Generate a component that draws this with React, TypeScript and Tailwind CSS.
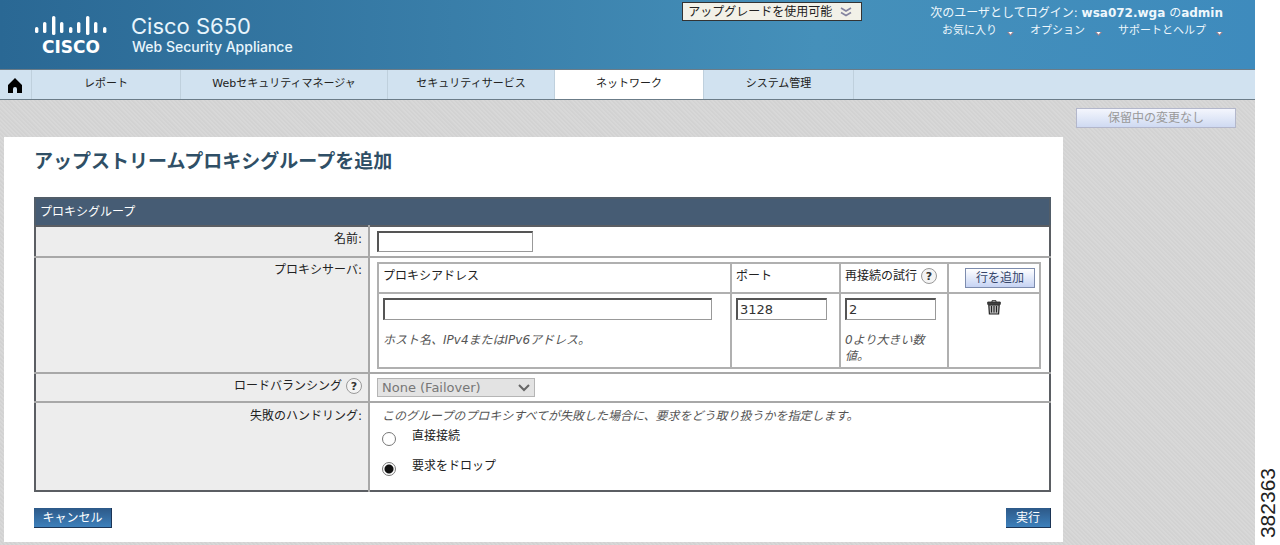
import { useState, type ReactNode } from "react";

const bars = [
  [0, 11, 6], [8, 6, 11], [17, 0, 19], [25, 6, 11], [34, 11, 6],
  [42, 6, 11], [51, 0, 19], [59, 6, 11], [68, 11, 6],
];

const tabs = [
  { label: "レポート", width: "w-[149px]" },
  { label: "Webセキュリティマネージャ", width: "w-[207px]" },
  { label: "セキュリティサービス", width: "w-[167px]" },
  { label: "ネットワーク", width: "w-[149px]", active: true },
  { label: "システム管理", width: "w-[150px]" },
];

const inset = "border-t-2 border-l-2 border-r border-b border-t-[#555] border-l-[#555] border-r-[#999] border-b-[#999] bg-white text-[#333] outline-none";
const hint = "text-xs leading-4 italic text-[#555]";
const action = "h-5 border-r border-b border-r-[#1c3556] border-b-[#1c3556] bg-gradient-to-b from-[#2d5988] to-[#3d80bb] text-xs leading-4 text-white";

function Logo() {
  return (
    <div className="flex w-[72px] flex-col items-center gap-1 text-white">
      <svg width="72" height="19" viewBox="0 0 72 19" fill="currentColor" aria-hidden="true">
        {bars.map(([x, y, h]) => <rect key={x} x={x} y={y} width="3.4" height={h} rx="1.6" />)}
      </svg>
      <span className="text-[17px] leading-4 font-bold">CISCO</span>
    </div>
  );
}

function Help() {
  return (
    <button type="button" aria-label="ヘルプ" className="ml-1 inline-flex size-4 shrink-0 items-center justify-center rounded-full border border-[#999] bg-[#f4f4f4] text-[11px] leading-none font-bold text-[#333]">
      ?
    </button>
  );
}

function MenuLink({ children }: { children: ReactNode }) {
  return (
    <a href="#" className="flex items-center gap-[10px]">
      {children}
      <svg className="mt-1" width="7" height="5" viewBox="0 0 7 5" aria-hidden="true">
        <path d="M0 1h7L3.5 5z" fill="#9c7f8c" />
        <path d="M1.5 1h4L3.5 3.4z" fill="#fff" />
      </svg>
    </a>
  );
}

function Trash() {
  return (
    <svg width="14" height="15" viewBox="0 0 14 15" aria-hidden="true">
      <path d="M5 0.7h4v1.6M5 0.7v1.6" fill="none" stroke="#333" />
      <path d="M0.7 2h12.6v2.4H0.7z" fill="#444" stroke="#222" strokeWidth="0.8" />
      <path d="M1.8 5h10.4l-0.6 9H2.4z" fill="#bbb" stroke="#222" strokeWidth="1.2" />
      <path d="M4.5 6v6.5M7 6v6.5M9.5 6v6.5" stroke="#222" strokeWidth="1.1" />
    </svg>
  );
}

export default function App() {
  const [failure, setFailure] = useState("drop");
  const label = "border-r-2 border-[#a8a8a8] bg-[#ededed] pr-[6px] text-right align-top font-normal";
  const cell = "border-2 border-[#b0b0b0] px-1 text-left align-top font-normal";
  return (
    <div className="flex bg-white font-['DejaVu_Sans','Noto_Sans_CJK_JP',sans-serif] text-xs leading-4 text-[#222]">
      <div className="min-w-0 flex-1 bg-[#d5d5d5] bg-[repeating-linear-gradient(45deg,#d2d2d2_0px,#d2d2d2_1px,#d8d8d8_2px,#d8d8d8_3px)]">
        <header className="flex h-[69px] bg-gradient-to-r from-[#2a6894] via-[#4590ba] via-65% to-[#3e8bbd]">
          <div className="flex flex-1 gap-6 pt-4 pl-[35px]">
            <Logo />
            <div className="font-['Inter',sans-serif] text-[#e8f5fc]">
              <div className="text-[22px] leading-5">Cisco S650</div>
              <div className="pt-[3px] pl-px text-sm leading-4 font-medium">Web Security Appliance</div>
            </div>
          </div>
          <div className="flex items-start gap-[68px] pr-8">
            <button type="button" className="mt-[2px] flex h-[19px] w-[180px] items-center justify-between border border-[#333] bg-[#f2f1e8] px-[5px] text-[#222]">
              アップグレードを使用可能
              <svg className="mr-1" width="12" height="10" viewBox="0 0 12 10" fill="none" stroke="#8484a0" strokeWidth="1.6" aria-hidden="true">
                <path d="M1 1l5 3 5-3M1 5.5l5 3 5-3" />
              </svg>
            </button>
            <div className="flex flex-col items-end pt-1 text-[#eef7fc]">
              <div className="leading-[18px]">次のユーザとしてログイン: <b>wsa072.wga</b> の<b>admin</b></div>
              <div className="flex gap-4 text-[11px] leading-[18px]">
                <MenuLink>お気に入り</MenuLink>
                <MenuLink>オプション</MenuLink>
                <MenuLink>サポートとヘルプ</MenuLink>
              </div>
            </div>
          </div>
        </header>
        <nav className="flex h-[31px] border-y border-[#6b7c88] bg-[#d1e2f0] text-[11px]">
          <a href="#" aria-label="ホーム" className="flex w-8 items-center border-r border-[#bfd0dd] pt-[2px] pl-2">
            <svg width="14" height="15" viewBox="0 0 14 15" aria-hidden="true">
              <path d="M7 0L14 7v8H9v-4a2 2 0 0 0-4 0v4H0V7z" fill="#000" />
            </svg>
          </a>
          {tabs.map((t) => (
            <a key={t.label} href="#" className={`${t.width} ${t.active ? "bg-white" : ""} border-r border-[#bfd0dd] pt-[6px] text-center`}>{t.label}</a>
          ))}
        </nav>
        <div className="flex">
          <main className="mt-[37px] mb-1 ml-1 min-w-0 flex-1 bg-white pr-3 pb-[14px] pl-[30px]">
            <h1 className="pt-3 pb-6 text-[19px] leading-6 font-bold text-[#2f4f66]">アップストリームプロキシグループを追加</h1>
            <table className="w-full table-fixed border-collapse border-2 border-[#5b5e63]">
              <caption className="h-7 border-2 border-b-0 border-[#515d69] bg-[#465c74] px-1 pt-[5px] text-left leading-4 text-white">プロキシグループ</caption>
              <colgroup><col className="w-[334px]" /><col /></colgroup>
              <tbody>
                <tr className="h-[31px] border-b-2 border-[#a8a8a8]">
                  <th scope="row" className={`${label} pt-1`}><label htmlFor="name">名前:</label></th>
                  <td className="pl-[7px]"><input id="name" className={`${inset} block h-[21px] w-[156px] px-1`} /></td>
                </tr>
                <tr className="h-[116px] border-b-2 border-[#a8a8a8]">
                  <th scope="row" className={`${label} pt-1`}>プロキシサーバ:</th>
                  <td className="pt-1 pr-2 pl-[7px] align-top">
                    <table className="w-full table-fixed border-collapse">
                      <colgroup><col /><col className="w-[109px]" /><col className="w-[108px]" /><col className="w-[92px]" /></colgroup>
                      <thead>
                        <tr className="h-[30px]">
                          <th className={`${cell} pt-1`}>プロキシアドレス</th>
                          <th className={`${cell} pt-1`}>ポート</th>
                          <th className={`${cell} pt-1`}><span className="flex items-center whitespace-nowrap">再接続の試行 <Help /></span></th>
                          <th className={`${cell} pt-1`}><button type="button" className="ml-auto block h-5 w-[70px] border border-[#7d8cae] bg-gradient-to-b from-white to-[#c6d3f3] text-center text-[#36466b]">行を追加</button></th>
                        </tr>
                      </thead>
                      <tbody>
                        <tr className="h-[75px]">
                          <td className={`${cell} pt-1`}>
                            <input aria-label="プロキシアドレス" className={`${inset} block h-[22px] w-[329px] px-1`} />
                            <p className={`${hint} pt-3`}>ホスト名、IPv4またはIPv6アドレス。</p>
                          </td>
                          <td className={`${cell} pt-1`}><input aria-label="ポート" defaultValue="3128" className={`${inset} block h-[22px] w-[91px] px-[2px] text-[13px]`} /></td>
                          <td className={`${cell} pt-1`}>
                            <input aria-label="再接続の試行" defaultValue="2" className={`${inset} block h-[22px] w-[91px] px-[2px] text-[13px]`} />
                            <p className={`${hint} pt-3`}>0より大きい数値。</p>
                          </td>
                          <td className={`${cell} pt-[6px]`}><button type="button" aria-label="行を削除" className="mx-auto block"><Trash /></button></td>
                        </tr>
                      </tbody>
                    </table>
                  </td>
                </tr>
                <tr className="h-[29px] border-b-2 border-[#a8a8a8]">
                  <th scope="row" className={`${label} pt-1`}><span className="flex items-center justify-end"><label htmlFor="balance">ロードバランシング</label><Help /></span></th>
                  <td className="pl-[7px]">
                    <div className="relative w-[158px]">
                      <select id="balance" disabled className="block h-[19px] w-full appearance-none border border-[#b5b5b5] bg-[#e3e3e3] pl-1 text-[13px] leading-4 text-[#777]"><option>None (Failover)</option></select>
                      <svg className="pointer-events-none absolute top-[6px] right-[5px]" width="12" height="8" viewBox="0 0 12 8" fill="none" stroke="#666" strokeWidth="2" aria-hidden="true"><path d="M1 1l5 5 5-5" /></svg>
                    </div>
                  </td>
                </tr>
                <tr className="h-[89px]">
                  <th scope="row" className={`${label} pt-[5px]`}>失敗のハンドリング:</th>
                  <td className="pt-[5px] pl-3 align-top">
                    <p className={hint}>このグループのプロキシすべてが失敗した場合に、要求をどう取り扱うかを指定します。</p>
                    {[["direct", "直接接続"], ["drop", "要求をドロップ"]].map(([value, text]) => (
                      <label key={value} className="flex h-[30px] items-start gap-4 pt-1">
                        <input type="radio" name="failure" value={value} checked={failure === value} onChange={() => setFailure(value)} className="mt-1 size-[14px] appearance-none rounded-full border border-[#777] bg-white checked:bg-[radial-gradient(circle,#111_0px,#111_4px,#fff_5px)]" />
                        {text}
                      </label>
                    ))}
                  </td>
                </tr>
              </tbody>
            </table>
            <div className="flex justify-between pt-4">
              <button type="button" className={`${action} w-[78px]`}>キャンセル</button>
              <button type="button" className={`${action} w-[45px]`}>実行</button>
            </div>
          </main>
          <aside className="w-48 pt-2 pl-[13px]">
            <button type="button" disabled className="block h-5 w-40 border border-[#b3b7cb] bg-gradient-to-b from-[#f4f6fd] to-[#cfdaf2] text-[#999]">保留中の変更なし</button>
          </aside>
        </div>
      </div>
      <div className="flex w-[25px] items-end justify-center pb-2">
        <span className="rotate-180 font-['Liberation_Sans',sans-serif] text-[21px] leading-5 text-[#222] [writing-mode:vertical-rl]">382363</span>
      </div>
    </div>
  );
}
